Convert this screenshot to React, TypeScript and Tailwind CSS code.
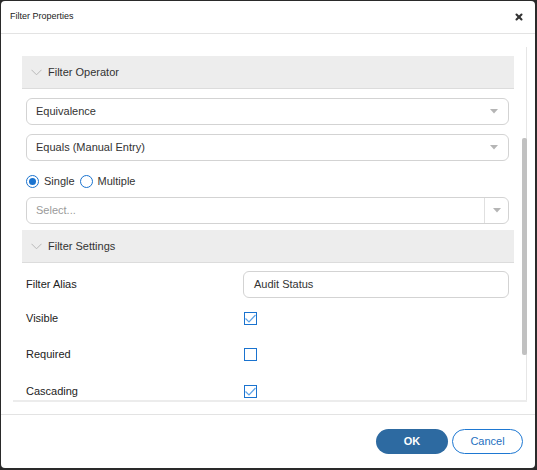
import { X } from "lucide-react";

const font = { fontFamily: '"Liberation Sans", Arial, sans-serif' };

function Caret() {
  return (
    <svg width="8" height="5" viewBox="0 0 8 5" className="shrink-0">
      <path d="M0 0 L8 0 L4 4.5 Z" fill="#b5b5b5" />
    </svg>
  );
}

function SectionHeader({ title }: { title: string }) {
  return (
    <div className="flex h-[33px] items-center border-b border-[#dcdcdc] bg-[#ededed] pl-[9px]">
      <svg width="11" height="7" viewBox="0 0 11 7" className="shrink-0">
        <path d="M0.5 0.8 L5.5 5.8 L10.5 0.8" fill="none" stroke="#b8b8b8" strokeWidth="1" />
      </svg>
      <span className="ml-[6px] text-[11px] text-[#333]">{title}</span>
    </div>
  );
}

function SelectBox({ value }: { value: string }) {
  return (
    <div className="flex h-[27px] items-center justify-between rounded-[6px] border border-[#d3d3d3] bg-white pl-[9px] pr-[10px]">
      <span className="text-[11px] text-[#333]">{value}</span>
      <Caret />
    </div>
  );
}

function Checkbox({ checked }: { checked?: boolean }) {
  return (
    <div className="flex h-[13px] w-[13px] items-center justify-center border-[1.5px] border-[#1a73cf] bg-white">
      {checked && (
        <svg width="11" height="9" viewBox="0 0 11 9">
          <path d="M0.5 4.5 L4 8 L10.5 1" fill="none" stroke="#5ea2e6" strokeWidth="1.2" />
        </svg>
      )}
    </div>
  );
}

function Radio({ checked }: { checked?: boolean }) {
  return (
    <div className="flex h-[13px] w-[13px] items-center justify-center rounded-full border-[1.5px] border-[#1a73cf] bg-white">
      {checked && <div className="h-[7px] w-[7px] rounded-full bg-[#1a73cf]" />}
    </div>
  );
}

const rows = [
  { label: "Visible", checked: true, mt: "mt-[8px]" },
  { label: "Required", checked: false, mt: "mt-[12.5px]" },
  { label: "Cascading", checked: true, mt: "mt-[12.5px]" },
];

export default function App() {
  return (
    <div className="h-[470px] w-[537px] bg-[#2a2a2a] pb-[2px] pl-[1px] pr-[2px] pt-[1px]" style={font}>
      <div className="flex h-full flex-col overflow-hidden rounded-[4px] bg-white">
        {/* header */}
        <div className="flex h-[33px] shrink-0 items-center justify-between border-b border-[#e3e3e3] pl-[9px] pr-[11px]">
          <span className="text-[9px] text-[#222]">Filter Properties</span>
          <X className="h-[10px] w-[10px] text-[#333]" strokeWidth={5} />
        </div>

        {/* body */}
        <div className="relative ml-[12px] mr-[8px] h-[368px] shrink-0 overflow-hidden border-b-2 border-[#ececec]">
          <div className="pl-[9px] pr-[13px] pt-[22px]">
            <SectionHeader title="Filter Operator" />
            <div className="flex flex-col pl-[4px] pr-[5px]">
              <div className="mt-[9px] flex flex-col gap-[9px]">
                <SelectBox value="Equivalence" />
                <SelectBox value="Equals (Manual Entry)" />
              </div>
              <div className="mt-[13px] flex h-[14px] items-center text-[11px] text-[#333]">
                <Radio checked />
                <span className="ml-[5px]">Single</span>
                <div className="ml-[5px]">
                  <Radio />
                </div>
                <span className="ml-[5px]">Multiple</span>
              </div>
              <div className="mt-[9px] flex h-[27px] items-center rounded-[6px] border border-[#d3d3d3] bg-white">
                <span className="flex-1 pl-[9px] text-[11px] text-[#9a9a9a]">Select...</span>
                <div className="flex h-full w-[24px] items-center justify-center border-l border-[#e0e0e0]">
                  <Caret />
                </div>
              </div>
            </div>
            <div className="mt-[6px]">
              <SectionHeader title="Filter Settings" />
            </div>
            <div className="flex flex-col pl-[4px] pr-[5px]">
              <div className="mt-[8px] grid grid-cols-[217px_1fr] items-center">
                <span className="text-[11px] text-[#222]">Filter Alias</span>
                <div className="flex h-[27px] items-center rounded-[6px] border border-[#d3d3d3] pl-[10px] text-[11px] text-[#333]">
                  Audit Status
                </div>
              </div>
              {rows.map((r) => (
                <div key={r.label} className={`${r.mt} grid h-[24px] grid-cols-[218px_1fr] items-center`}>
                  <span className="text-[11px] text-[#222]">{r.label}</span>
                  <Checkbox checked={r.checked} />
                </div>
              ))}
            </div>
          </div>
          {/* scrollbar */}
          <div className="absolute right-0 top-[13px] h-full w-px bg-[#e6e6e6]" />
          <div className="absolute right-0 top-[104px] h-[217px] w-[5px] rounded-[2px] bg-[#c1c1c1]" />
        </div>

        {/* footer */}
        <div className="mt-[12px] flex flex-1 items-center justify-end gap-[4px] border-t border-[#e3e3e3] pr-[12px]">
          <button className="h-[25px] w-[72px] rounded-full bg-[#2d6aa1] text-[11px] font-semibold text-white">OK</button>
          <button className="h-[25px] w-[71px] rounded-full border border-[#1e78d2] bg-white text-[11px] text-[#1e6fc0]">Cancel</button>
        </div>
      </div>
    </div>
  );
}
